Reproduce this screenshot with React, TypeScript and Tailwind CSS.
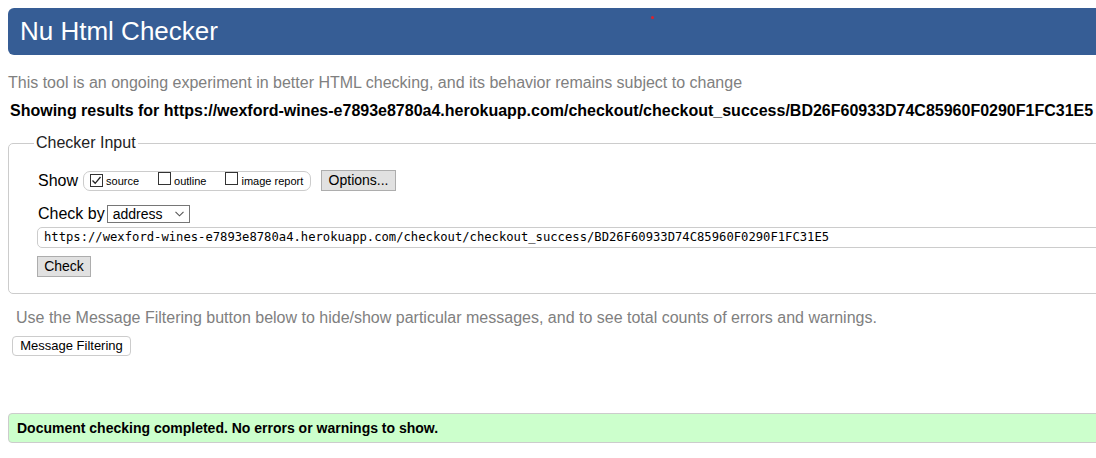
import React from "react"

const url =
  "https://wexford-wines-e7893e8780a4.herokuapp.com/checkout/checkout_success/BD26F60933D74C85960F0290F1FC31E5"

const Box = ({ checked }: { checked?: boolean }) => (
  <span className="relative inline-flex h-[13px] w-[13px] shrink-0 items-center justify-center border border-[#333] bg-white">
    {checked && (
      <svg width="11" height="11" viewBox="0 0 11 11" className="absolute">
        <path d="M1.5 5.5 L4.2 8.3 L9.5 2" fill="none" stroke="#222" strokeWidth="1.3" />
      </svg>
    )}
  </span>
)

const GrayButton = ({ children, className = "" }: { children: React.ReactNode; className?: string }) => (
  <div
    className={`flex h-[21px] items-center justify-center border border-[#adadad] bg-[#e1e1e1] text-[14px] text-black ${className}`}
  >
    {children}
  </div>
)

export default function App() {
  return (
    <div
      className="relative h-[458px] w-[1096px] overflow-hidden bg-white text-black"
      style={{ fontFamily: '"Liberation Sans", Arial, sans-serif' }}
    >
      <div className="w-[1130px] pl-2">
        <div className="mt-2 flex h-[47px] items-center rounded-l-md bg-[#365d95] pl-3 pb-[1px]">
          <h1 className="text-[26px] leading-none text-white">Nu Html Checker</h1>
        </div>
        <span className="absolute left-[651px] top-[16px] h-[3px] w-[3px] rounded-full bg-[#e0202a]" />

        <p className="mt-[19px] text-[16px] leading-[18px] text-[#808080]">
          This tool is an ongoing experiment in better HTML checking, and its behavior remains subject to change
        </p>
        <p className="mt-[10px] pl-[2px] text-[16px] font-bold leading-[18px] whitespace-nowrap">
          Showing results for {url}
        </p>

        <fieldset className="mt-[14px] rounded-[5px] border border-[#cccccc] pl-[29px] pb-[16px]">
          <legend className="-ml-[4px] px-[2px] text-[16px] leading-[18px] text-[#222]">Checker Input</legend>

          <div className="mt-[18px] flex h-[21px] items-center">
            <span className="text-[16px] leading-[18px]">Show</span>
            <div className="ml-[5px] flex h-[20px] w-[228px] items-center rounded-[7px] border border-[#cccccc] pl-[6px] text-[11px]">
              <Box checked />
              <span className="ml-[3px] mt-[2px]">source</span>
              <span className="ml-[19px]">
                <Box />
              </span>
              <span className="ml-[3px] mt-[2px]">outline</span>
              <span className="ml-[19px]">
                <Box />
              </span>
              <span className="ml-[3px] mt-[2px]">image report</span>
            </div>
            <GrayButton className="ml-[10px] w-[75px]">Options...</GrayButton>
          </div>

          <div className="mt-[14px] flex h-[18px] items-center">
            <span className="text-[16px] leading-[18px]">Check by</span>
            <div className="ml-[2px] flex h-[18px] w-[83px] items-center justify-between border border-[#767676] pl-[5px] pr-[5px] text-[14px]">
              <span>address</span>
              <svg width="9" height="6" viewBox="0 0 9 6">
                <path d="M0.5 0.8 L4.5 4.8 L8.5 0.8" fill="none" stroke="#555" strokeWidth="1.1" />
              </svg>
            </div>
          </div>

          <div
            className="mt-[4px] -ml-[1px] flex h-[21px] items-center rounded-[5px] border border-[#cccccc] pl-[6px] text-[12.2px] whitespace-nowrap"
            style={{ fontFamily: '"DejaVu Sans Mono", "Liberation Mono", monospace' }}
          >
            {url}
          </div>

          <GrayButton className="mt-[8px] -ml-[1px] w-[54px]">Check</GrayButton>
        </fieldset>

        <p className="mt-[15px] pl-2 text-[16px] leading-[18px] text-[#808080]">
          Use the Message Filtering button below to hide/show particular messages, and to see total counts of errors and
          warnings.
        </p>
        <div className="mt-[9px] ml-1 flex h-[20px] w-[119px] items-center justify-center rounded-[4px] border border-[#cccccc] bg-white text-[13px]">
          Message Filtering
        </div>

        <div className="mt-[57px] flex h-[30px] items-center rounded-[4px] border border-[#cccccc] bg-[#ccffcc] pl-2 text-[14px] font-bold">
          Document checking completed. No errors or warnings to show.
        </div>
      </div>
    </div>
  )
}
